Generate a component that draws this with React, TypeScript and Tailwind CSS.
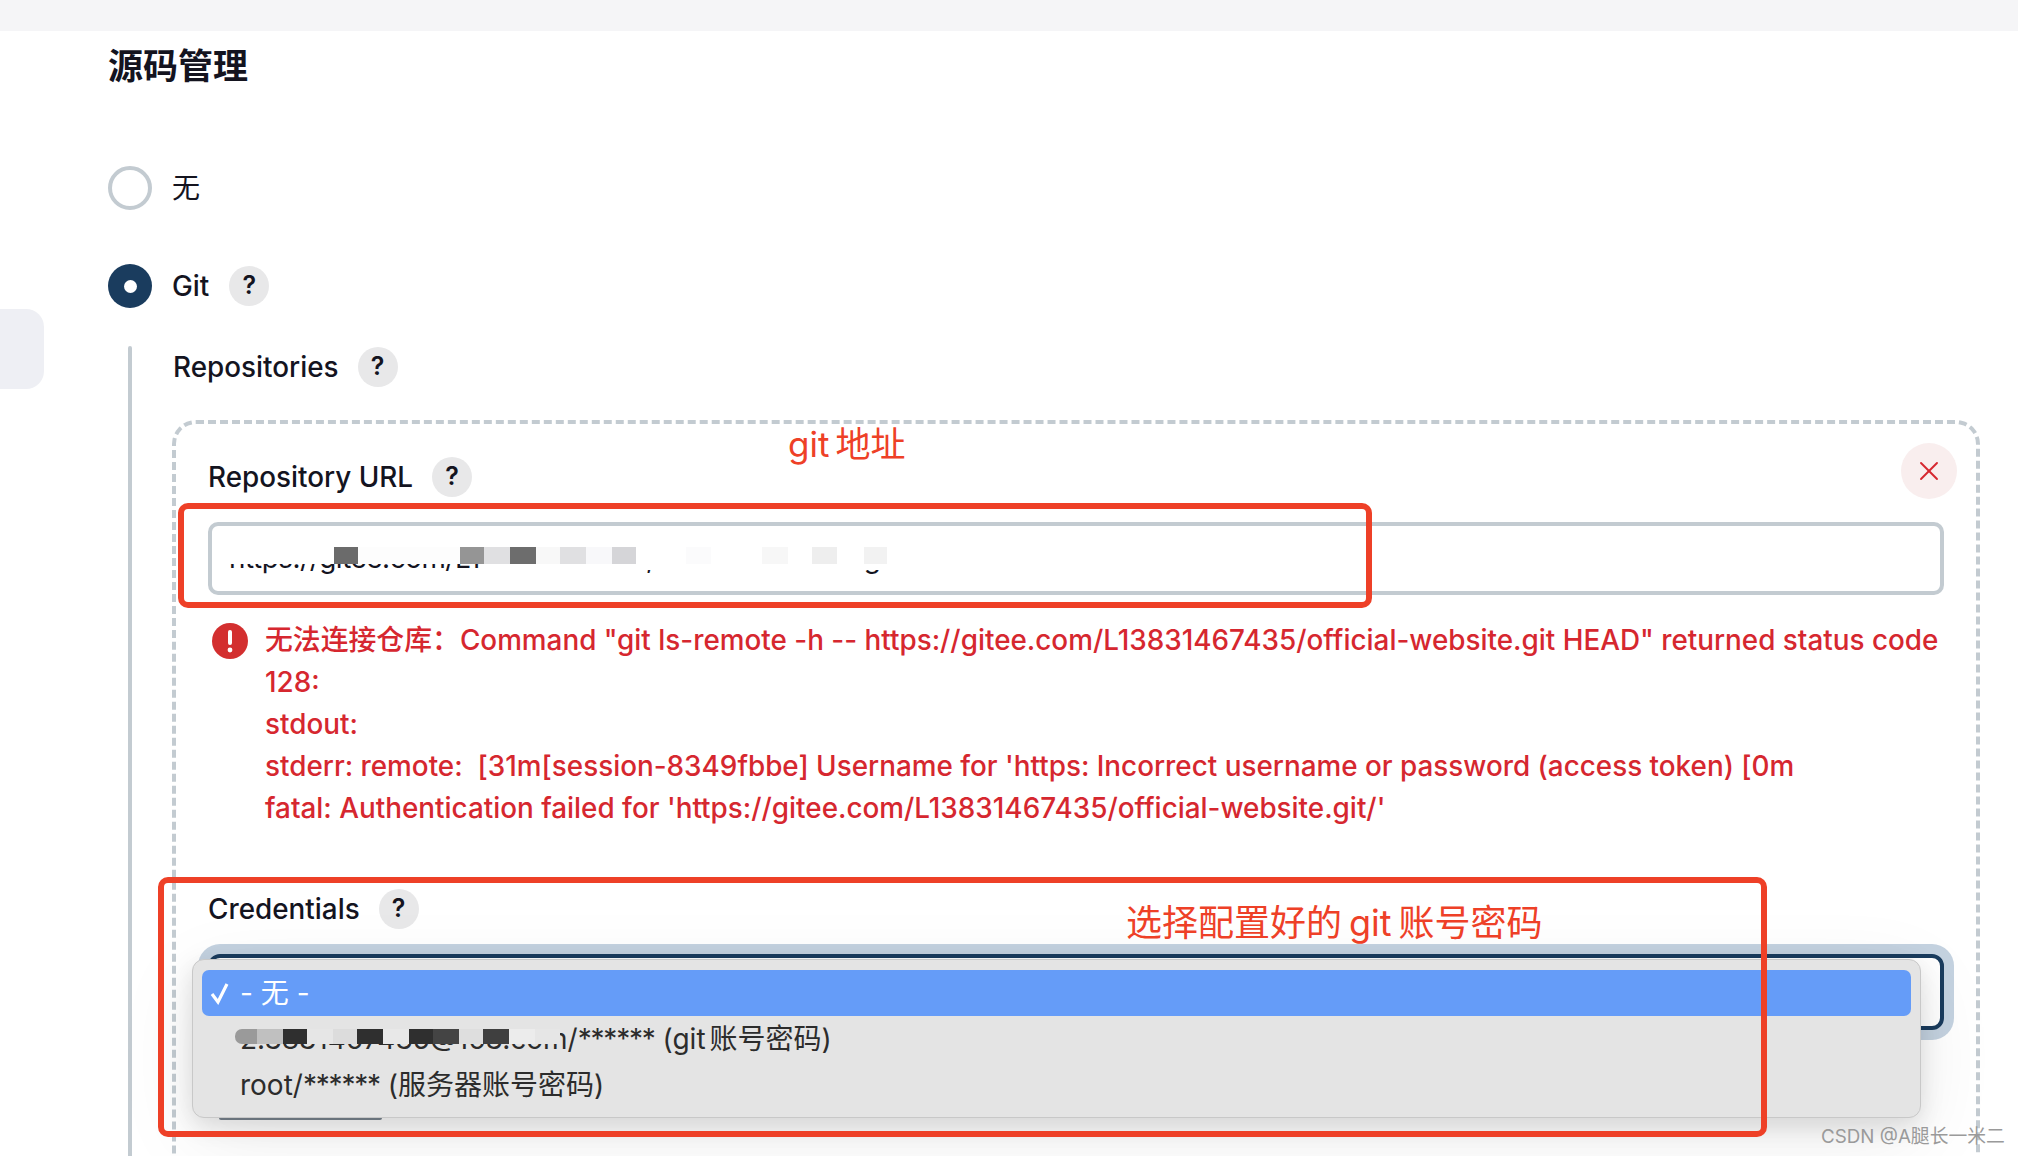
import { X } from "lucide-react";

const fontStack = '"Inter", "Noto Sans CJK SC", sans-serif';

function Help() {
  return (
    <span className="flex h-[40px] w-[40px] shrink-0 items-center justify-center rounded-full bg-[#e8e8e9] text-[25px] font-semibold text-[#14141f]">
      ?
    </span>
  );
}

function Label({ text }: { text: string }) {
  return (
    <div className="flex h-[40px] items-center gap-[19px]">
      <span className="pt-[1px] text-[27.85px] font-[450] leading-none text-[#14141f]">{text}</span>
      <Help />
    </div>
  );
}

// pixelated strips that hide the account names in the screenshot
const urlMosaic: [number, string][] = [
  [105, "#ffffff"],
  [24, "#6b6b6b"],
  [102, "#fdfdfd"],
  [24, "#959595"],
  [26, "#e0e0e2"],
  [26, "#6d6d6d"],
  [24, "#f8f8f8"],
  [26, "#e0e0e2"],
  [26, "#f8f8fa"],
  [24, "#d5d5d8"],
  [50, "#ffffff"],
  [25, "#fbfbfc"],
  [51, "#ffffff"],
  [26, "#f7f7f7"],
  [24, "#ffffff"],
  [25, "#eeeeee"],
  [27, "#ffffff"],
  [23, "#f2f2f2"],
];

const accountMosaic: [number, string][] = [
  [22, "#9a9a9a"],
  [26, "#c0c0c0"],
  [24, "#2f2f2f"],
  [26, "#e6e6e6"],
  [24, "#dcdcdc"],
  [26, "#2f2f2f"],
  [26, "#e8e8e8"],
  [24, "#2f2f2f"],
  [26, "#444444"],
  [24, "#dedede"],
  [26, "#3f3f3f"],
  [26, "#ececec"],
  [25, "#e6e6e6"],
];

function Mosaic({ cells, className }: { cells: [number, string][]; className: string }) {
  return (
    <div className={`absolute flex ${className}`}>
      {cells.map(([w, c], i) => (
        <div key={i} className="h-full shrink-0" style={{ width: w, background: c }} />
      ))}
    </div>
  );
}

const errorLines = [
  '无法连接仓库：Command "git ls-remote -h -- https://gitee.com/L13831467435/official-website.git HEAD" returned status code',
  "128:",
  "stdout:",
  "stderr: remote:  [31m[session-8349fbbe] Username for 'https: Incorrect username or password (access token) [0m",
  "fatal: Authentication failed for 'https://gitee.com/L13831467435/official-website.git/'",
];

export default function App() {
  return (
    <div
      className="relative h-[1156px] w-[2018px] overflow-hidden bg-white"
      style={{ fontFamily: fontStack }}
    >
      <div className="h-[31px] bg-[#f5f5f7]" />

      {/* side panel edge */}
      <div className="absolute left-0 top-[309px] h-[80px] w-[44px] rounded-r-[18px] bg-[#eeeff4]" />

      <main className="pl-[108px]">
        <h2 className="flex h-[70px] items-center text-[35px] font-semibold text-[#14141f]">源码管理</h2>

        <div className="mt-[65px] flex h-[44px] items-center gap-[20px]">
          <span className="h-[44px] w-[44px] rounded-full border-[4px] border-[#c3cbd1] bg-white" />
          <span className="text-[28px] leading-none text-[#14141f]">无</span>
        </div>

        <div className="mt-[54px] flex h-[44px] items-center">
          <span className="flex h-[44px] w-[44px] items-center justify-center rounded-full bg-[#1a3c5e]">
            <span className="h-[13px] w-[13px] rounded-full bg-white" />
          </span>
          <span className="ml-[20px] mr-[20px] pt-[1px] text-[27.85px] font-[450] leading-none text-[#14141f]">Git</span>
          <Help />
        </div>

        <div className="mt-[38px] flex">
          <div className="ml-[20px] h-[900px] w-[4px] rounded-full bg-[#c3cbd1]" />
          <div className="ml-[40px]">
            <div className="pl-[1px] pt-[1px]">
              <Label text="Repositories" />
            </div>

            <div className="relative mt-[33px] h-[900px] w-[1808px] rounded-[24px] border-[4px] border-dashed border-[#c3cbd1] pl-[32px] pt-[33px]">
              <button className="absolute right-[19px] top-[19px] flex h-[56px] w-[56px] items-center justify-center rounded-full bg-[#f9eeee] text-[#d6272f]">
                <X size={32} strokeWidth={1.4} />
              </button>

              <Label text="Repository URL" />

              <div className="relative mt-[25px] flex h-[73px] w-[1736px] items-center rounded-[10px] border-[4px] border-[#c3cbd1] bg-white pl-[17px] text-[27.85px] text-[#14141f]">
                <span className="tracking-[-0.45px]">https://gitee.com/L1</span>
                <span className="ml-[166px]">,</span>
                <span className="ml-[210px]">g</span>
                <div className="absolute left-[17px] top-[15px] h-[6px] w-[700px] bg-white" />
                <Mosaic cells={urlMosaic} className="left-[17px] top-[21px] h-[17px]" />
                <div className="absolute left-[290px] top-[38px] h-[6px] w-[400px] bg-white" />
              </div>

              <div className="mt-[24px] flex text-[#d6272f]">
                <svg viewBox="0 0 36 36" className="ml-[4px] mt-[4px] h-[36px] w-[36px] shrink-0">
                  <circle cx="18" cy="18" r="18" fill="#d32f2f" />
                  <rect x="16" y="7" width="4" height="15" rx="2" fill="#fff" />
                  <circle cx="18" cy="27" r="2.4" fill="#fff" />
                </svg>
                <div className="ml-[17px] whitespace-pre text-[27.85px] font-[450] leading-[42px]">
                  {errorLines.map((line) => (
                    <div key={line}>{line}</div>
                  ))}
                </div>
              </div>

              <div className="mt-[60px]">
                <Label text="Credentials" />
              </div>

              <div className="relative mt-[25px]">
                <div className="h-[76px] w-[1736px] rounded-[12px] border-[4px] border-[#1a3c5e] bg-white shadow-[0_0_0_10px_#c4d2e0]" />
                <div className="ml-[11px] mt-[88px] h-[2px] w-[163px] rounded-b-[8px] bg-[#7a8590]" />

                {/* open select menu */}
                <div className="absolute left-[-16px] top-[5px] h-[159px] w-[1729px] rounded-[12px] border border-[#c8c8c8] bg-[#e4e4e4] px-[9px] pt-[10px] text-[28px] text-[#2c2c2c] shadow-[0_8px_24px_rgba(0,0,0,0.12),0_20px_80px_rgba(0,0,0,0.08)]">
                  <div className="flex h-[46px] items-center rounded-[7px] bg-[#659cf8] text-white">
                    <svg viewBox="0 0 20 24" className="ml-[8px] h-[24px] w-[20px]" fill="none" stroke="#fff" strokeWidth="3.2">
                      <path d="M2 13 L8 21 L17 3" />
                    </svg>
                    <span className="ml-[10px]">- 无 -</span>
                  </div>
                  <div className="relative flex h-[46px] items-center whitespace-nowrap pl-[38px]">
                    <span>
                      2.3831467435@163.com/
                      <span className="tracking-[-1.2px]">******</span> (git
                      <span className="ml-[4px]">账号密码)</span>
                    </span>
                    <div className="absolute left-[33px] top-[9px] h-[4px] w-[325px] bg-[#e4e4e4]" />
                    <Mosaic cells={accountMosaic} className="left-[33px] top-[13px] h-[15px] overflow-hidden rounded-l-[7px]" />
                  </div>
                  <div className="flex h-[46px] items-center whitespace-nowrap pl-[38px]">
                    <span>
                      root/<span className="tracking-[-1.2px]">******</span> (服务器账号密码)
                    </span>
                  </div>
                </div>
              </div>
            </div>
          </div>
        </div>
      </main>

      {/* annotations drawn over the page */}
      <div className="absolute left-[178px] top-[503px] h-[105px] w-[1194px] rounded-[10px] border-[6px] border-[#ee4027]" />
      <div className="absolute left-[158px] top-[877px] h-[260px] w-[1609px] rounded-[10px] border-[6px] border-[#ee4027]" />
      <span className="absolute left-[788px] top-[421px] text-[35px] leading-[46px] text-[#ee4027]">
        git<span className="ml-[6px]">地址</span>
      </span>
      <span className="absolute left-[1126px] top-[900px] text-[36px] leading-[46px] text-[#ee4027]">
        选择配置好的<span className="mx-[7px]">git</span>账号密码
      </span>

      <span className="absolute left-[1821px] top-[1124px] text-[18.8px] leading-[26px] text-[#9a9a9a]">CSDN @A腿长一米二</span>
    </div>
  );
}
